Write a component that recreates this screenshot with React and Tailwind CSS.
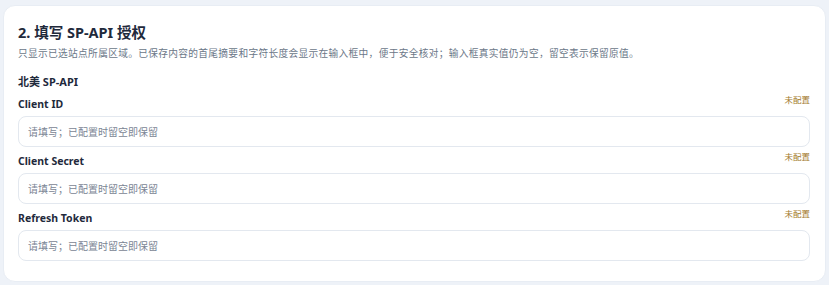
export default function App() {
    const fields = ['Client ID', 'Client Secret', 'Refresh Token']

    return (
        <div
            className="min-h-[285px] bg-[#eef2f8] px-[3px] pt-[5px] pb-[4px]"
            style={{ fontFamily: '"Noto Sans", "Noto Sans CJK SC", sans-serif' }}
        >
            <div className="bg-white rounded-xl border border-[#e8edf4] pt-[15px] pb-[20px] pl-[14px] pr-[15px]">
                <h2 className="text-[14.5px] leading-[22px] font-bold text-[#1f2a3c]">2. 填写 SP-API 授权</h2>
                <p className="mt-[3px] text-[9.7px] leading-[16px] tracking-[0.33px] text-[#6b7788]">
                    只显示已选站点所属区域。已保存内容的首尾摘要和字符长度会显示在输入框中，便于安全核对；输入框真实值仍为空，留空表示保留原值。
                </p>
                <h3 className="mt-[12px] text-[11px] leading-[16px] font-bold text-[#1f2a3c]">北美 SP-API</h3>
                <div className="mt-[7px] flex flex-col gap-[7px]">
                    {fields.map((name) => (
                        <div key={name}>
                            <div className="flex justify-between items-start h-[14px]">
                                <label className="text-[10.5px] leading-[14px] font-bold text-[#1f2a3c]">{name}</label>
                                <span className="text-[8.5px] leading-[10px] text-[#a37a2c] -mt-[2px]">未配置</span>
                            </div>
                            <input
                                type="text"
                                placeholder="请填写；已配置时留空即保留"
                                className="mt-[5px] w-full h-[31px] rounded-lg border border-[#e3e8ef] bg-white px-[9px] text-[10px] text-[#1f2a3c] placeholder:text-[#7b8594] focus:outline-none"
                            />
                        </div>
                    ))}
                </div>
            </div>
        </div>
    )
}
